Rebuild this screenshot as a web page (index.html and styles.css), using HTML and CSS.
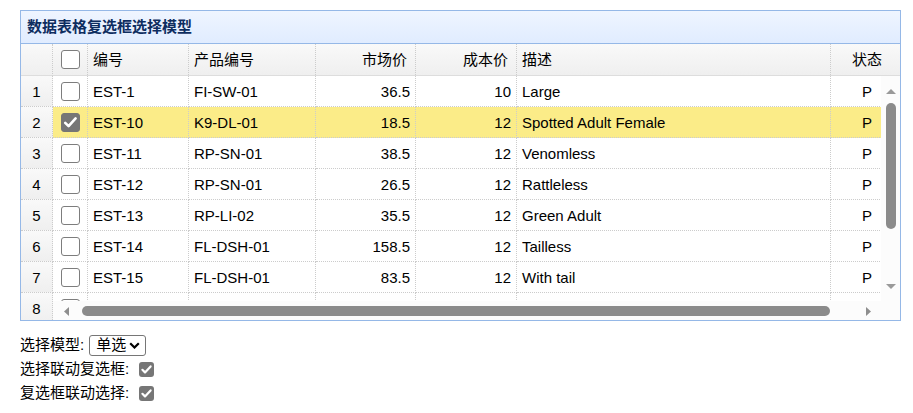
FILE: index.html
```html
<!DOCTYPE html>
<html lang="zh-CN">
<head>
<meta charset="utf-8">
<title>数据表格复选框选择模型</title>
<link rel="stylesheet" href="styles.css">
</head>
<body>
<div class="panel">
  <div class="panel-header"><span class="panel-title">数据表格复选框选择模型</span></div>
  <div class="grid">
    <div class="view1">
      <div class="rn-head"></div>
      <div class="body1">
        <div class="rn">1</div>
        <div class="rn">2</div>
        <div class="rn">3</div>
        <div class="rn">4</div>
        <div class="rn">5</div>
        <div class="rn">6</div>
        <div class="rn">7</div>
        <div class="rn">8</div>
      </div>
    </div>
    <div class="view2">
      <div class="header2">
        <div class="hrow">
          <div class="hc w-ck"><span class="box"></span></div>
          <div class="hc w-id">编号</div>
          <div class="hc w-pid">产品编号</div>
          <div class="hc w-price right">市场价</div>
          <div class="hc w-cost right">成本价</div>
          <div class="hc w-attr">描述</div>
          <div class="hc w-status center">状态</div>
        </div>
      </div>
      <div class="bodywrap">
        <div class="body2">
          <div class="row">
            <div class="c w-ck"><span class="box"></span></div>
            <div class="c w-id">EST-1</div>
            <div class="c w-pid">FI-SW-01</div>
            <div class="c w-price right">36.5</div>
            <div class="c w-cost right">10</div>
            <div class="c w-attr">Large</div>
            <div class="c w-status center">P</div>
          </div>
          <div class="row selected">
            <div class="c w-ck"><span class="box checked"><svg width="19" height="19" viewBox="0 0 19 19"><path d="M4.2 9.8 L7.6 13.2 L14.6 5.4" fill="none" stroke="#fff" stroke-width="2.6" stroke-linecap="round" stroke-linejoin="round"/></svg></span></div>
            <div class="c w-id">EST-10</div>
            <div class="c w-pid">K9-DL-01</div>
            <div class="c w-price right">18.5</div>
            <div class="c w-cost right">12</div>
            <div class="c w-attr">Spotted Adult Female</div>
            <div class="c w-status center">P</div>
          </div>
          <div class="row">
            <div class="c w-ck"><span class="box"></span></div>
            <div class="c w-id">EST-11</div>
            <div class="c w-pid">RP-SN-01</div>
            <div class="c w-price right">38.5</div>
            <div class="c w-cost right">12</div>
            <div class="c w-attr">Venomless</div>
            <div class="c w-status center">P</div>
          </div>
          <div class="row">
            <div class="c w-ck"><span class="box"></span></div>
            <div class="c w-id">EST-12</div>
            <div class="c w-pid">RP-SN-01</div>
            <div class="c w-price right">26.5</div>
            <div class="c w-cost right">12</div>
            <div class="c w-attr">Rattleless</div>
            <div class="c w-status center">P</div>
          </div>
          <div class="row">
            <div class="c w-ck"><span class="box"></span></div>
            <div class="c w-id">EST-13</div>
            <div class="c w-pid">RP-LI-02</div>
            <div class="c w-price right">35.5</div>
            <div class="c w-cost right">12</div>
            <div class="c w-attr">Green Adult</div>
            <div class="c w-status center">P</div>
          </div>
          <div class="row">
            <div class="c w-ck"><span class="box"></span></div>
            <div class="c w-id">EST-14</div>
            <div class="c w-pid">FL-DSH-01</div>
            <div class="c w-price right">158.5</div>
            <div class="c w-cost right">12</div>
            <div class="c w-attr">Tailless</div>
            <div class="c w-status center">P</div>
          </div>
          <div class="row">
            <div class="c w-ck"><span class="box"></span></div>
            <div class="c w-id">EST-15</div>
            <div class="c w-pid">FL-DSH-01</div>
            <div class="c w-price right">83.5</div>
            <div class="c w-cost right">12</div>
            <div class="c w-attr">With tail</div>
            <div class="c w-status center">P</div>
          </div>
          <div class="row">
            <div class="c w-ck"><span class="box"></span></div>
            <div class="c w-id"></div>
            <div class="c w-pid"></div>
            <div class="c w-price"></div>
            <div class="c w-cost"></div>
            <div class="c w-attr"></div>
            <div class="c w-status"></div>
          </div>
        </div>
        <div class="vscroll">
          <svg class="v-up" width="10" height="5" viewBox="0 0 10 5"><path d="M0 5 L5 0 L10 5 Z" fill="#9a9a9a"/></svg>
          <div class="v-thumb"></div>
          <div class="v-space"></div>
          <svg class="v-down" width="10" height="5" viewBox="0 0 10 5"><path d="M0 0 L10 0 L5 5 Z" fill="#9a9a9a"/></svg>
        </div>
      </div>
      <div class="hscroll">
        <div class="htrack">
          <svg class="h-left" width="5" height="9" viewBox="0 0 5 9"><path d="M5 0 L5 9 L0 4.5 Z" fill="#8e8e8e"/></svg>
          <div class="h-thumb"></div>
          <svg class="h-right" width="5" height="9" viewBox="0 0 5 9"><path d="M0 0 L5 4.5 L0 9 Z" fill="#8e8e8e"/></svg>
        </div>
        <div class="corner"></div>
      </div>
    </div>
  </div>
</div>
<div class="opts">
  <div class="opt">
    <span>选择模型:</span>
    <span class="select"><span>单选</span><svg class="chev" width="11" height="7" viewBox="0 0 11 7"><path d="M1.2 1.2 L5.5 5.5 L9.8 1.2" fill="none" stroke="#000" stroke-width="2.2"/></svg></span>
  </div>
  <div class="opt">
    <span>选择联动复选框:</span>
    <span class="cb"><svg width="15" height="15" viewBox="0 0 15 15"><path d="M3.4 7.8 L6 10.4 L11.6 4.4" fill="none" stroke="#fff" stroke-width="2.2" stroke-linecap="round" stroke-linejoin="round"/></svg></span>
  </div>
  <div class="opt">
    <span>复选框联动选择:</span>
    <span class="cb"><svg width="15" height="15" viewBox="0 0 15 15"><path d="M3.4 7.8 L6 10.4 L11.6 4.4" fill="none" stroke="#fff" stroke-width="2.2" stroke-linecap="round" stroke-linejoin="round"/></svg></span>
  </div>
</div>
</body>
</html>
```

FILE: styles.css
```css
* { box-sizing: border-box; }

body {
  margin: 0;
  padding: 10px 0 0 20px;
  font-family: "Liberation Sans", "Noto Sans CJK SC", sans-serif;
  font-size: 15px;
  color: #000;
  background: #fff;
}

.panel {
  width: 881px;
  border: 1px solid #95B8E7;
}

.panel-header {
  height: 33px;
  border-bottom: 1px solid #95B8E7;
  background: linear-gradient(to bottom, #EFF5FF 0, #E0ECFF 100%);
  display: flex;
  align-items: center;
  padding-left: 6px;
}

.panel-title {
  font-weight: bold;
  color: #0E2D5F;
  line-height: 18px;
}

.grid {
  display: flex;
  height: 276px;
}

.view1 {
  width: 32px;
  flex: none;
  display: flex;
  flex-direction: column;
}

.rn-head {
  height: 32px;
  flex: none;
  border-bottom: 1px solid #ddd;
  border-right: 1px dotted #ccc;
  background: linear-gradient(to bottom, #F9F9F9 0, #EFEFEF 100%);
}

.body1 {
  flex: 1;
  overflow: hidden;
}

.rn {
  height: 31px;
  border-right: 1px dotted #ccc;
  border-bottom: 1px dotted #ccc;
  background: linear-gradient(to bottom, #F9F9F9 0, #EFEFEF 100%);
  text-align: center;
  line-height: 31px;
}

.view2 {
  flex: 1;
  min-width: 0;
  display: flex;
  flex-direction: column;
}

.header2 {
  height: 32px;
  flex: none;
  border-bottom: 1px solid #ddd;
  background: linear-gradient(to bottom, #F9F9F9 0, #EFEFEF 100%);
  overflow: hidden;
}

.hrow, .row {
  display: flex;
  width: max-content;
}

.hc {
  flex: none;
  height: 31px;
  line-height: 31px;
  padding: 0 5px;
  border-right: 1px dotted #ccc;
  white-space: nowrap;
  overflow: hidden;
}

.hc.right { text-align: right; padding-right: 8px; }

.c {
  flex: none;
  height: 31px;
  line-height: 31px;
  padding: 0 5px;
  border-right: 1px dotted #ccc;
  border-bottom: 1px dotted #ccc;
  white-space: nowrap;
  overflow: hidden;
}

.right { text-align: right; }
.center { text-align: center; }

.w-ck { width: 35px; display: flex; align-items: center; justify-content: center; padding: 0; }
.w-id { width: 101px; }
.w-pid { width: 127px; }
.w-price { width: 100px; }
.w-cost { width: 101px; }
.w-attr { width: 314px; }
.w-status { width: 73px; }

.row.selected { background: #FBEC88; }

.box {
  width: 19px;
  height: 19px;
  border: 1px solid #7d7d7d;
  border-radius: 3px;
  background: #fff;
  display: block;
}

.box.checked {
  background: #767676;
  border-color: #767676;
}

.box.checked svg {
  display: block;
  margin: -1px;
}

.bodywrap {
  height: 225px;
  flex: none;
  display: flex;
}

.body2 {
  flex: 1;
  min-width: 0;
  overflow: hidden;
}

.vscroll {
  width: 19px;
  flex: none;
  background: #fcfcfc;
  display: flex;
  flex-direction: column;
  align-items: center;
}

.v-up { margin-top: 13px; display: block; }

.v-thumb {
  margin-top: 9px;
  width: 10px;
  height: 126px;
  border-radius: 5px;
  background: #8b8b8b;
}

.v-space { flex: 1; }

.v-down { margin-bottom: 12px; display: block; }

.hscroll {
  height: 19px;
  flex: none;
  display: flex;
}

.htrack {
  flex: 1;
  display: flex;
  align-items: center;
  background: #fcfcfc;
  padding: 1px 10px 0 11px;
}

.h-left, .h-right { display: block; flex: none; }

.h-thumb {
  flex: 1;
  height: 10px;
  border-radius: 5px;
  background: #8b8b8b;
  margin: 0 36px 0 13px;
}

.corner {
  width: 19px;
  flex: none;
  background: #fcfcfc;
}

.opts {
  margin-top: 12px;
  display: flex;
  flex-direction: column;
}

.opt {
  height: 24px;
  display: flex;
  align-items: center;
  line-height: 18px;
}

.select {
  margin-left: 5px;
  width: 57px;
  height: 21px;
  border: 1px solid #767676;
  border-radius: 3px;
  display: flex;
  align-items: center;
  padding-left: 6px;
}

.chev { margin-left: 3px; display: block; }

.cb {
  margin-left: 10px;
  width: 15px;
  height: 15px;
  border-radius: 3px;
  background: #767676;
  display: block;
}

.cb svg { display: block; }
```
